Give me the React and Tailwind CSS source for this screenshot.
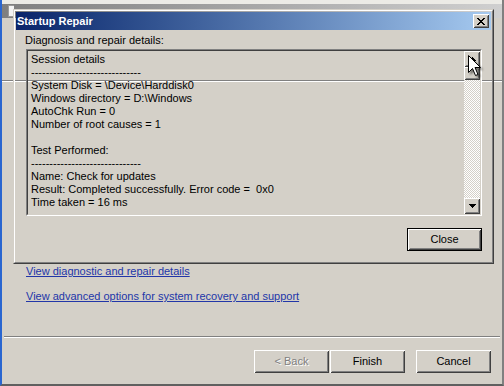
import React from 'react';

const dashes = '------------------------------';

const details = [
  'Session details',
  dashes,
  'System Disk = \\Device\\Harddisk0',
  'Windows directory = D:\\Windows',
  'AutoChk Run = 0',
  'Number of root causes = 1',
  '',
  'Test Performed:',
  dashes,
  'Name: Check for updates',
  'Result: Completed successfully. Error code =  0x0',
  'Time taken = 16 ms',
];

const raised =
  'shadow-[inset_1px_1px_#ffffff,inset_-1px_-1px_#404040,inset_2px_2px_#d4d0c8,inset_-2px_-2px_#808080]';

function Arrow({ down }) {
  return (
    <svg width="7" height="4" viewBox="0 0 7 4" className={down ? 'rotate-180' : ''}>
      <path d="M3 0h1v1h1v1h1v1h1v1H0V3h1V2h1V1h1z" fill="#000" />
    </svg>
  );
}

function ScrollBar() {
  return (
    <div className="flex w-[16px] shrink-0 flex-col">
      <div className={`flex h-[16px] items-center justify-center bg-[#d4d0c8] ${raised}`}>
        <Arrow />
      </div>
      <div className={`h-[13px] bg-[#d4d0c8] ${raised}`} />
      <div className="flex-1 bg-[repeating-conic-gradient(#ffffff_0_25%,#d4d0c8_0_50%)] bg-[length:2px_2px]" />
      <div className={`flex h-[16px] items-center justify-center bg-[#d4d0c8] ${raised}`}>
        <Arrow down />
      </div>
    </div>
  );
}

function Button({ children, isDefault, disabled }) {
  return (
    <div
      className={`flex h-[23px] w-[75px] items-center justify-center bg-[#d4d0c8] ${
        isDefault ? 'border border-black' : ''
      } ${raised}`}
    >
      <span
        className={
          disabled ? 'text-[#808080] [text-shadow:1px_1px_0_#ffffff]' : 'text-black'
        }
      >
        {children}
      </span>
    </div>
  );
}

function Cursor() {
  return (
    <svg
      width="16"
      height="24"
      viewBox="0 0 16 24"
      className="absolute left-[468px] top-[55px] drop-shadow-[2px_2px_1px_rgba(0,0,0,0.45)]"
    >
      <path
        d="M0.5 0.5V17.5L4.5 13.5L7.5 20.5L10 19.5L7 12.5H12.5Z"
        fill="#fff"
        stroke="#000"
        strokeWidth="1"
      />
    </svg>
  );
}

export default function App() {
  return (
    <div className="relative h-[386px] w-[504px] overflow-hidden bg-[#d4d0c8] font-['Liberation_Sans',sans-serif] text-[11px] leading-[13px] text-black">
      {/* wizard window behind */}
      <div className="flex h-full flex-col border-l-2 border-l-[#2a66d0] border-r-2 border-r-[#808080] border-b-2 border-b-[#606060]">
        <div className="h-[4px] bg-[#ecebe6]" />
        <div className="flex h-[14px] bg-gradient-to-r from-[#7f7f7f] to-[#d0d0d0]">
          <div className="ml-[6px] mt-px h-[12px] w-[6px] border border-[#9a9a9a] border-r-0 bg-[#f4f4f4]" />
        </div>
        <div className="h-[63px] border-b border-[#808080]" />
        <div className="h-px bg-white" />
        <div className="flex flex-col gap-[12px] pl-[24px] pt-[183px]">
          <span className="text-[#2236a8] underline">View diagnostic and repair details</span>
          <span className="text-[#2236a8] underline">
            View advanced options for system recovery and support
          </span>
        </div>
        <div className="mx-[2px] mt-[33px] h-[2px] border-t border-[#808080] border-b border-b-white" />
        <div className="flex justify-end pr-[11px] pt-[12px]">
          <Button disabled>&lt; Back</Button>
          <div className="ml-px">
            <Button>Finish</Button>
          </div>
          <div className="ml-[11px]">
            <Button>Cancel</Button>
          </div>
        </div>
      </div>

      {/* Startup Repair dialog */}
      <div className="absolute left-[13px] top-[9px] h-[255px] w-[481px] border border-[#d4d0c8] border-r-[#404040] border-b-[#404040]">
        <div className="flex h-full flex-col border border-white border-r-[#808080] border-b-[#808080] p-[1px]">
          <div className="flex h-[18px] items-center justify-between bg-gradient-to-r from-[#0a246a] to-[#a6caf0] pl-[1px] pr-[2px]">
            <span className="font-bold text-white">Startup Repair</span>
            <div className={`flex h-[14px] w-[16px] items-center justify-center bg-[#d4d0c8] ${raised}`}>
              <svg width="8" height="7" viewBox="0 0 8 7">
                <path
                  d="M0 0h2v1h1v1h2V1h1V0h2v1H7v1H6v1H5v1h1v1h1v1h1v1H6V6H5V5H3v1H2v1H0V6h1V5h1V4h1V3H2V2H1V1H0z"
                  fill="#000"
                />
              </svg>
            </div>
          </div>
          <div className="flex flex-1 flex-col pl-[9px] pr-[9px] pt-[4px]">
            <div>Diagnosis and repair details:</div>
            <div className="ml-px mt-[2px] h-[167px] border border-[#808080] border-r-white border-b-white">
              <div className="flex h-full border border-[#404040] border-r-[#d4d0c8] border-b-[#d4d0c8]">
                <div className="flex-1 whitespace-pre pl-[3px] pt-[2px]">
                  {details.map((l, i) => (
                    <div key={i} className="h-[13px]">
                      {l}
                    </div>
                  ))}
                </div>
                <ScrollBar />
              </div>
            </div>
            <div className="mt-[12px] flex justify-end">
              <Button isDefault>Close</Button>
            </div>
          </div>
        </div>
      </div>

      <Cursor />
    </div>
  );
}
